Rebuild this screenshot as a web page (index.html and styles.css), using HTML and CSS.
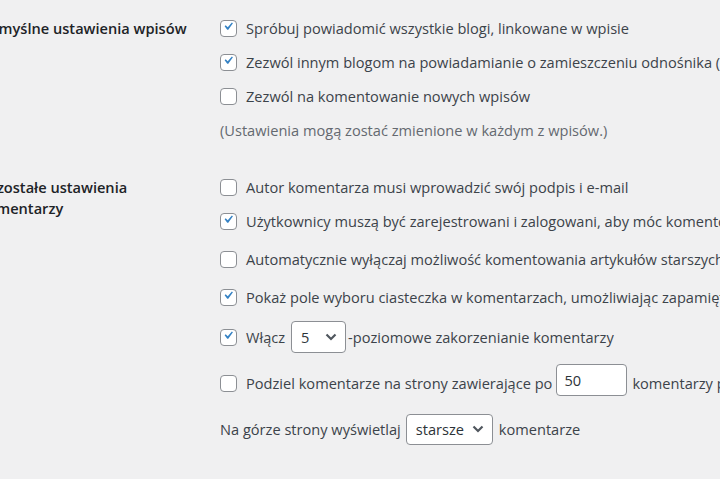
FILE: index.html
```html
<!DOCTYPE html>
<html lang="pl">
<head>
    <meta charset="UTF-8">
    <meta name="viewport" content="width=device-width, initial-scale=1.0">
    <title>Ustawienia dyskusji</title>
    <link rel="stylesheet" href="styles.css">
</head>
<body>

    <div class="form-table">

        <div class="form-row">
            <div class="row-title">Domyślne ustawienia wpisów</div>
            <div class="row-fields">
                <label class="option">
                    <span class="check is-checked"><svg viewBox="0 0 20 20"><path d="M14.83 4.89l1.34.94-5.81 8.38H9.02L5.78 9.67l1.34-1.25 2.57 2.4z"/></svg></span>
                    Spróbuj powiadomić wszystkie blogi, linkowane w wpisie
                </label>
                <label class="option">
                    <span class="check is-checked"><svg viewBox="0 0 20 20"><path d="M14.83 4.89l1.34.94-5.81 8.38H9.02L5.78 9.67l1.34-1.25 2.57 2.4z"/></svg></span>
                    Zezwól innym blogom na powiadamianie o zamieszczeniu odnośnika (pingbacki i trackbacki) do nowych wpisów
                </label>
                <label class="option">
                    <span class="check"></span>
                    Zezwól na komentowanie nowych wpisów
                </label>
                <p class="description">(Ustawienia mogą zostać zmienione w każdym z wpisów.)</p>
            </div>
        </div>

        <div class="form-row">
            <div class="row-title">Pozostałe ustawienia komentarzy</div>
            <div class="row-fields">
                <label class="option">
                    <span class="check"></span>
                    Autor komentarza musi wprowadzić swój podpis i e-mail
                </label>
                <label class="option">
                    <span class="check is-checked"><svg viewBox="0 0 20 20"><path d="M14.83 4.89l1.34.94-5.81 8.38H9.02L5.78 9.67l1.34-1.25 2.57 2.4z"/></svg></span>
                    Użytkownicy muszą być zarejestrowani i zalogowani, aby móc komentować
                </label>
                <label class="option option-days">
                    <span class="check"></span>
                    Automatycznie wyłączaj możliwość komentowania artykułów starszych niż
                </label>
                <label class="option">
                    <span class="check is-checked"><svg viewBox="0 0 20 20"><path d="M14.83 4.89l1.34.94-5.81 8.38H9.02L5.78 9.67l1.34-1.25 2.57 2.4z"/></svg></span>
                    Pokaż pole wyboru ciasteczka w komentarzach, umożliwiając zapamiętanie danych autora
                </label>
                <div class="option option-control">
                    <span class="check is-checked"><svg viewBox="0 0 20 20"><path d="M14.83 4.89l1.34.94-5.81 8.38H9.02L5.78 9.67l1.34-1.25 2.57 2.4z"/></svg></span>
                    Włącz<span class="select select-depth">5<svg viewBox="0 0 12 8"><polyline points="1.5,1.5 6,6 10.5,1.5"/></svg></span>-poziomowe zakorzenianie komentarzy
                </div>
                <div class="option option-control">
                    <span class="check"></span>
                    Podziel komentarze na strony zawierające po<span class="text-input">50</span>komentarzy pierwszego poziomu
                </div>
                <div class="option option-control option-plain">
                    Na górze strony wyświetlaj<span class="select select-order">starsze<svg viewBox="0 0 12 8"><polyline points="1.5,1.5 6,6 10.5,1.5"/></svg></span>komentarze
                </div>
            </div>
        </div>

    </div>

</body>
</html>
```
FILE: styles.css
```css
html,
body {
    margin: 0;
    padding: 0;
    overflow: hidden;
}

body {
    background-color: #f0f0f1;
    color: #3c434a;
    font-family: "Open Sans", "Noto Sans", sans-serif;
    font-size: 14.6px;
}

.form-table {
    margin-left: -21px;
}

.form-row {
    display: grid;
    grid-template-columns: 241px 1fr;
    padding: 18px 0 19px;
}

.row-title {
    width: 215px;
    color: #1d2327;
    font-weight: 600;
    line-height: 21px;
}

.row-fields {
    white-space: nowrap;
}

.option {
    display: flex;
    align-items: center;
    min-height: 20px;
    line-height: 20px;
    margin-bottom: 14px;
}

.option:last-child {
    margin-bottom: 0;
}

.option-days {
    min-height: 28px;
}

.option-control {
    min-height: 32px;
}

/* checkbox look-alike */
.check {
    flex: none;
    display: inline-flex;
    align-items: center;
    justify-content: center;
    box-sizing: border-box;
    width: 17px;
    height: 17px;
    margin-right: 9px;
    background-color: #fff;
    border: 1px solid #8c8f94;
    border-radius: 4px;
}

.check svg {
    width: 21px;
    height: 21px;
    margin: -3px 0 0 -1px;
    fill: #3582c4;
}

.description {
    margin: 0;
    color: #646970;
    line-height: 20px;
}

.select,
.text-input {
    flex: none;
    display: inline-flex;
    align-items: center;
    box-sizing: border-box;
    height: 32px;
    background-color: #fff;
    border: 1px solid #8c8f94;
    border-radius: 4px;
    color: #2c3338;
}

.select {
    justify-content: space-between;
    padding: 0 8px 0 9px;
}

.select svg {
    width: 12px;
    height: 8px;
    fill: none;
    stroke: #50575e;
    stroke-width: 2.2;
}

.select-depth {
    width: 55px;
    margin-left: 6px;
    margin-right: 2px;
}

.select-order {
    width: 87px;
    height: 31px;
    margin: 0 6px 0 5px;
}

.text-input {
    width: 71px;
    padding: 0 7px;
    margin: -6px 5px 0 4px;
}
```
